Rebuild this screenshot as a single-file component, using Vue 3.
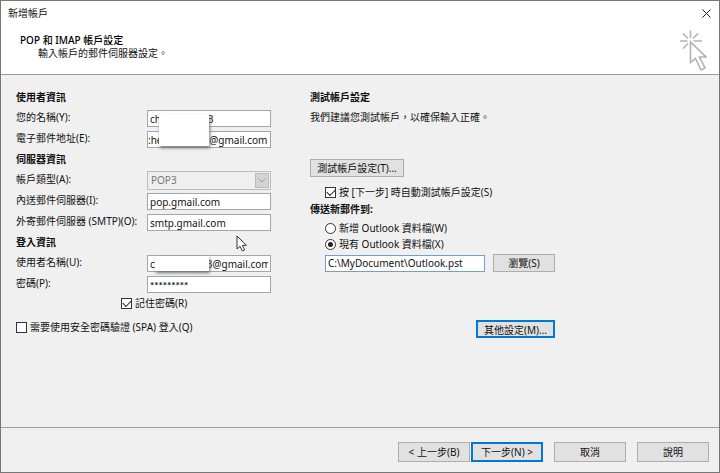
<script setup>
import { ref } from 'vue'

const gap = (n) => '\u00a0'.repeat(n)
const name = ref('ch' + gap(18) + '3')
const email = ref(':he' + gap(18) + '@gmail.com')
const incoming = ref('pop.gmail.com')
const outgoing = ref('smtp.gmail.com')
const user = ref('c' + gap(20) + '3@gmail.com')
const password = ref('*********')
const remember = ref(true)
const spa = ref(false)
const autoTest = ref(true)
const delivery = ref('existing')
const dataFile = ref('C:\\MyDocument\\Outlook.pst')
</script>

<template>
  <div class="dialog">
    <header class="header">
      <div class="titlebar">
        <span>新增帳戶</span>
        <button class="close" aria-label="關閉">
          <svg width="9" height="9" viewBox="0 0 9 9"><path d="M0.5 0.5L8.5 8.5M8.5 0.5L0.5 8.5" stroke="#222" fill="none" /></svg>
        </button>
      </div>
      <div class="banner">
        <div>
          <h1>POP 和 IMAP 帳戶設定</h1>
          <p class="subtitle">輸入帳戶的郵件伺服器設定。</p>
        </div>
        <svg class="wizard" width="28" height="42" viewBox="0 0 28 42" fill="none" stroke="#b2b2b2" stroke-width="1.6">
          <path d="M11.500 0.500V8M1 11H8.500M14.500 11H23M4 3.500L9 8.500M19 3.500L14 8.500M4 18.500L9 13.500" />
          <path d="M11.500 12V32.500L16.500 28.500L22 40L26 38L20.500 27H27Z" fill="#fff" />
        </svg>
      </div>
    </header>

    <main class="content">
      <section class="column">
        <h2>使用者資訊</h2>
        <div class="masked">
          <div class="row"><label for="name">您的名稱(Y):</label><input id="name" v-model="name" class="field" type="text" /></div>
          <div class="row"><label for="email">電子郵件地址(E):</label><input id="email" v-model="email" class="field tight" type="text" /></div>
          <span class="mask mask-tall"></span>
        </div>
        <h2>伺服器資訊</h2>
        <div class="row">
          <label for="type">帳戶類型(A):</label>
          <div class="combo">
            <select id="type" disabled><option>POP3</option></select>
            <span class="arrow"><svg width="8" height="5" viewBox="0 0 8 5"><path d="M0.500 0.500L4 4L7.500 0.500" stroke="#999" fill="none" /></svg></span>
          </div>
        </div>
        <div class="row"><label for="incoming">內送郵件伺服器(I):</label><input id="incoming" v-model="incoming" class="field" type="text" /></div>
        <div class="row"><label for="outgoing">外寄郵件伺服器 (SMTP)(O):</label><input id="outgoing" v-model="outgoing" class="field" type="text" /></div>
        <h2>登入資訊</h2>
        <div class="masked">
          <div class="row"><label for="user">使用者名稱(U):</label><input id="user" v-model="user" class="field" type="text" /></div>
          <span class="mask mask-short"></span>
        </div>
        <div class="row"><label for="password">密碼(P):</label><input id="password" v-model="password" class="field secret" type="text" /></div>
        <label class="option remember"><input v-model="remember" type="checkbox" />記住密碼(R)</label>
        <label class="option spa"><input v-model="spa" type="checkbox" />需要使用安全密碼驗證 (SPA) 登入(Q)</label>
      </section>

      <section class="column">
        <h2>測試帳戶設定</h2>
        <p class="hint">我們建議您測試帳戶，以確保輸入正確。</p>
        <button class="button test">測試帳戶設定(T)...</button>
        <div class="nested">
          <label class="option"><input v-model="autoTest" type="checkbox" />按 [下一步] 時自動測試帳戶設定(S)</label>
        </div>
        <h2>傳送新郵件到:</h2>
        <div class="nested">
          <label class="option"><input v-model="delivery" type="radio" name="delivery" value="new" />新增 Outlook 資料檔(W)</label>
          <label class="option"><input v-model="delivery" type="radio" name="delivery" value="existing" />現有 Outlook 資料檔(X)</label>
          <div class="file">
            <input v-model="dataFile" class="field path" type="text" aria-label="Outlook 資料檔" />
            <button class="button browse">瀏覽(S)</button>
          </div>
        </div>
        <button class="button more active">其他設定(M)...</button>
      </section>
    </main>

    <footer class="footer">
      <div class="pair">
        <button class="button">&lt; 上一步(B)</button>
        <button class="button active">下一步(N) &gt;</button>
      </div>
      <button class="button">取消</button>
      <button class="button">說明</button>
    </footer>

    <svg class="pointer" width="12" height="18" viewBox="0 0 12 18"><path d="M1 1V14L4 11.200L6.300 16L8.600 15L6.400 10.300H10.500Z" fill="#fff" stroke="#333" /></svg>
  </div>
</template>

<style>
body {
  margin: 0;
  background: #f0f0f0;
}
</style>

<style scoped>
* {
  box-sizing: border-box;
}
.dialog {
  position: relative;
  display: flex;
  flex-direction: column;
  min-height: 100vh;
  border: 1px solid #777;
  background: #f0f0f0;
  color: #111;
  font: 10px/18px "Noto Sans", "Noto Sans CJK TC", sans-serif;
}
h1, h2, p {
  margin: 0;
}
.header {
  background: #fff;
  border-bottom: 1px solid #999;
}
.titlebar {
  display: flex;
  justify-content: space-between;
  align-items: center;
  height: 24px;
  padding: 0 8px 0 7px;
}
.close {
  display: flex;
  padding: 0;
  border: 0;
  background: none;
}
.banner {
  display: flex;
  justify-content: space-between;
  height: 49px;
  padding: 9px 12px 0 19px;
}
.banner h1 {
  font-size: 10px;
  font-weight: 500;
  line-height: 13px;
  color: #000;
}
.subtitle {
  padding-left: 18px;
  line-height: 13px;
}
.wizard {
  margin-top: -4px;
}
.content {
  flex: 1;
  display: grid;
  grid-template-columns: 294px 1fr;
  padding: 13px 15px 0;
}
.column {
  display: flex;
  flex-direction: column;
}
h2 {
  height: 20px;
  font-size: 10px;
  font-weight: 700;
  line-height: 18px;
}
.masked {
  position: relative;
}
.row {
  display: grid;
  grid-template-columns: 131px 124px;
  align-items: center;
  height: 21px;
}
.row label {
  line-height: 17px;
  padding-bottom: 2px;
  white-space: nowrap;
}
.field {
  min-width: 0;
  height: 17px;
  padding: 0 2px;
  border: 1px solid #a3a5ac;
  border-radius: 0;
  background: #fff;
  color: #111;
  font: 10px/15px "Noto Sans", "Noto Sans CJK TC", sans-serif;
  outline: 0;
}
.tight {
  padding: 0;
}
.secret {
  font-family: Lato, sans-serif;
  font-weight: 700;
}
.mask {
  position: absolute;
  background: #fff;
  box-shadow: 1px 2px 3px #777;
}
.mask-tall {
  left: 143px;
  top: 6px;
  width: 50px;
  height: 32px;
}
.mask-short {
  left: 139px;
  top: 3px;
  width: 54px;
  height: 15px;
}
.combo {
  display: flex;
  height: 19px;
  border: 1px solid #bcbcbc;
}
.combo select {
  flex: 1;
  min-width: 0;
  appearance: none;
  padding: 0 3px;
  border: 0;
  background: transparent;
  color: #777;
  opacity: 1;
  font: 10px/17px "Noto Sans", sans-serif;
}
.arrow {
  display: flex;
  align-items: center;
  justify-content: center;
  width: 14px;
  margin: 1px;
  border: 1px solid #bbb;
  background: #d4d4d4;
}
.option {
  display: flex;
  align-items: center;
  gap: 3px;
  height: 16px;
  line-height: 16px;
  white-space: nowrap;
}
.option input {
  appearance: none;
  display: grid;
  place-items: center;
  width: 11px;
  height: 11px;
  margin: 0;
  border: 1px solid #333;
  background: #fff;
}
.option input[type="checkbox"]:checked::after {
  content: "";
  width: 7px;
  height: 4px;
  margin-bottom: 2px;
  border: solid #222;
  border-width: 0 0 1px 1px;
  transform: rotate(-45deg);
}
.option input[type="radio"] {
  border-radius: 50%;
}
.option input[type="radio"]:checked::after {
  content: "";
  width: 5px;
  height: 5px;
  border-radius: 50%;
  background: #222;
}
.remember {
  margin-left: 105px;
}
.spa {
  margin-top: 8px;
}
.hint {
  height: 51px;
}
.button {
  min-width: 72px;
  height: 20px;
  padding: 0;
  border: 1px solid #adadad;
  border-radius: 0;
  background: #e1e1e1;
  color: #111;
  font: 10px/16px "Noto Sans", "Noto Sans CJK TC", sans-serif;
  white-space: nowrap;
}
.active {
  border: 2px solid #0078d7;
}
.test {
  width: 94px;
  height: 18px;
}
.nested {
  padding-left: 15px;
}
.test + .nested {
  padding-top: 7px;
}
.file {
  display: flex;
  align-items: center;
  gap: 8px;
  margin-top: 2px;
}
.path {
  width: 160px;
  border-color: #7a9cc8;
}
.browse {
  width: 62px;
  min-width: 62px;
  height: 18px;
}
.more {
  width: 79px;
  height: 18px;
  margin: 48px 0 0 166px;
}
.footer {
  display: flex;
  justify-content: flex-end;
  gap: 11px;
  padding: 14px 10px 10px;
  border-top: 1px solid #a0a0a0;
}
.pair {
  display: flex;
  gap: 1px;
}
.pointer {
  position: absolute;
  left: 235px;
  top: 234px;
}
</style>
